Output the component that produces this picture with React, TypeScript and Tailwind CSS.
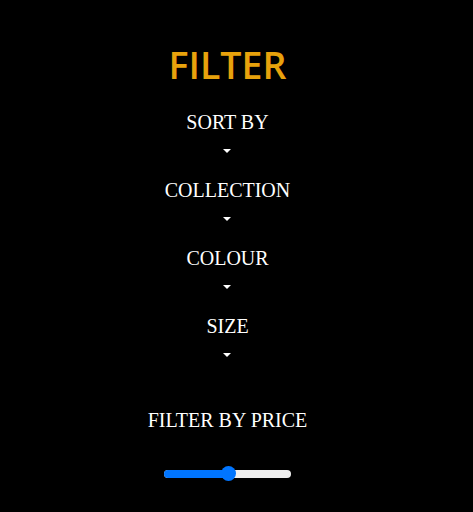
import React from "react";

const Caret = () => (
  <div className="mx-auto h-0 w-0 border-x-[4px] border-t-[4px] border-x-transparent border-t-white" />
);

const Item = ({ label }: { label: string }) => (
  <div className="flex h-[68px] flex-col items-center">
    <div className="pt-[2px] text-[20px] leading-[22px]">{label}</div>
    <div className="mt-[16px]">
      <Caret />
    </div>
  </div>
);

export default function App() {
  return (
    <div className="min-h-[512px] w-full bg-black">
      <div
        className="flex w-[455px] flex-col items-center pt-[39px] text-white"
        style={{ fontFamily: '"Liberation Serif", serif' }}
      >
        <h1
          className="text-[37.5px] font-semibold leading-[52px] text-[#e8a20c]"
          style={{ fontFamily: '"Open Sans", sans-serif' }}
        >
          FILTER
        </h1>
        <div className="mt-[18px] flex flex-col items-center">
          <Item label="SORT BY" />
          <Item label="COLLECTION" />
          <Item label="COLOUR" />
          <Item label="SIZE" />
        </div>
        <div className="mt-[28px] text-[20px] leading-[22px]">FILTER BY PRICE</div>
        <div className="relative mt-[35px] h-[16px] w-[127px]">
          <div className="absolute left-0 right-0 top-[4px] h-[8px] rounded-full bg-[#efefef]" />
          <div className="absolute left-0 top-[4px] h-[8px] w-[64px] rounded-full bg-[#0075ff]" />
          <div className="absolute left-[57px] top-0 h-[15px] w-[15px] rounded-full bg-[#0075ff]" />
        </div>
      </div>
    </div>
  );
}
